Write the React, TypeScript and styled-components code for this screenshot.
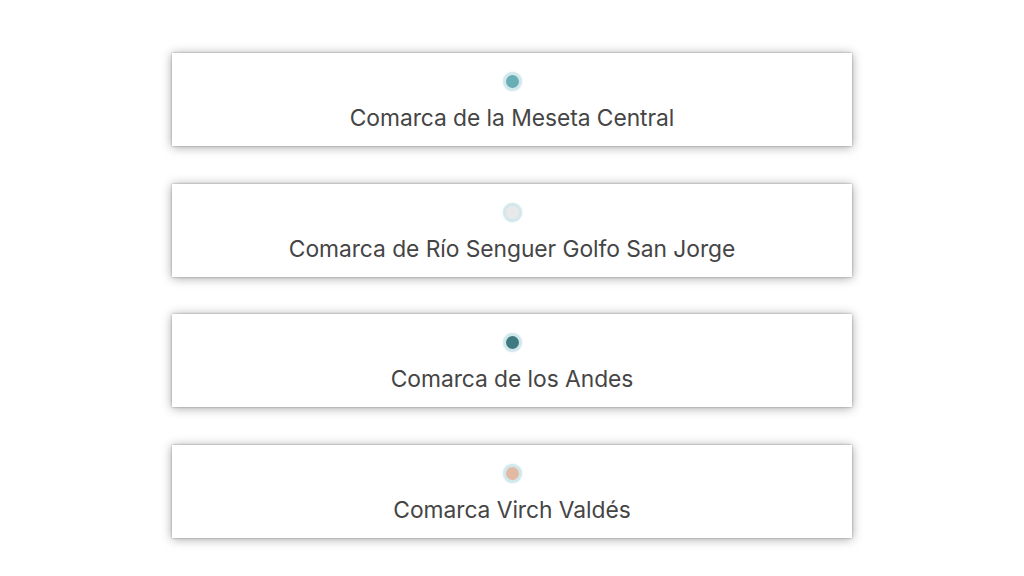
import React from "react";
import styled, { createGlobalStyle } from "styled-components";

const Global = createGlobalStyle`
  html, body { margin: 0; padding: 0; background: #ffffff; }
  body { font-family: Inter, "Noto Sans", sans-serif; }
`;

const Page = styled.div`
  width: 1024px;
  height: 576px;
  display: flex;
  flex-direction: column;
  align-items: center;
  padding-top: 53px;
  gap: 37.5px;
  box-sizing: border-box;
`;

const Card = styled.div`
  width: 680px;
  height: 93px;
  box-sizing: border-box;
  background: #ffffff;
  box-shadow: 0 0 2px rgba(0, 0, 0, 0.32), 0 1px 10px rgba(0, 0, 0, 0.36);
  display: flex;
  flex-direction: column;
  align-items: center;
  padding-top: 19px;
  gap: 13px;
`;

const Dot = styled.span<{ $color: string }>`
  width: 13px;
  height: 13px;
  border-radius: 50%;
  background: ${(p) => p.$color};
  border: 3px solid #d3e8ec;
  box-shadow: 0 0 2px #d3e8ec;
`;

const Label = styled.div`
  font-size: 22.8px;
  line-height: 28px;
  color: #454545;
  letter-spacing: -0.05px;
`;

const items = [
  { name: "Comarca de la Meseta Central", color: "#6aaeb5" },
  { name: "Comarca de Río Senguer Golfo San Jorge", color: "#e9e9e9" },
  { name: "Comarca de los Andes", color: "#3f7a80" },
  { name: "Comarca Virch Valdés", color: "#e2b9a2" },
];

export default function App() {
  return (
    <>
      <Global />
      <Page>
        {items.map((it) => (
          <Card key={it.name}>
            <Dot $color={it.color} />
            <Label>{it.name}</Label>
          </Card>
        ))}
      </Page>
    </>
  );
}
